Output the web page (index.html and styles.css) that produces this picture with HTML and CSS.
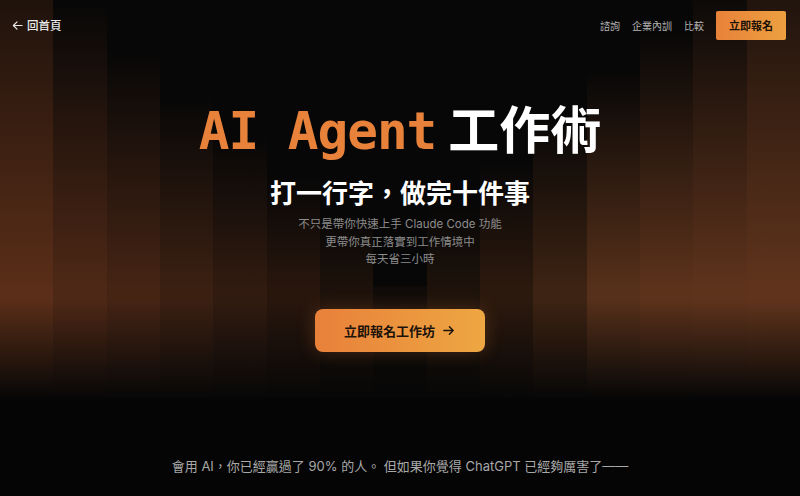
FILE: index.html
```html
<!DOCTYPE html>
<html lang="zh-Hant">
<head>
<meta charset="utf-8">
<title>AI Agent 工作術</title>
<link rel="stylesheet" href="styles.css">
</head>
<body>
<div class="page">
  <section class="hero">
    <div class="bars" aria-hidden="true">
      <span></span><span></span><span></span><span></span><span></span>
      <span></span><span></span><span></span><span></span><span></span>
      <span></span><span></span><span></span><span></span><span></span>
    </div>
    <header class="topbar">
      <a class="back" href="#">
        <svg class="back-icon" viewBox="0 0 12 12" width="11" height="11"><path d="M11 6H1.5M5.5 2L1.5 6l4 4" fill="none" stroke="currentColor" stroke-width="1.3" stroke-linecap="round" stroke-linejoin="round"/></svg>
        <span>回首頁</span>
      </a>
      <nav class="nav">
        <a href="#" class="nav-link">諮詢</a>
        <a href="#" class="nav-link">企業內訓</a>
        <a href="#" class="nav-link">比較</a>
        <a href="#" class="cta-sm">立即報名</a>
      </nav>
    </header>
    <div class="hero-body">
      <h1 class="title"><span class="title-mono">AI Agent</span><span class="title-cjk">工作術</span></h1>
      <h2 class="subtitle">打一行字，做完十件事</h2>
      <p class="lead">不只是帶你快速上手 Claude Code 功能<br>更帶你真正落實到工作情境中<br>每天省三小時</p>
      <a href="#" class="cta">立即報名工作坊
        <svg class="cta-icon" viewBox="0 0 14 14" width="13" height="13"><path d="M2 7h10M8 3l4 4-4 4" fill="none" stroke="currentColor" stroke-width="1.6" stroke-linecap="round" stroke-linejoin="round"/></svg>
      </a>
    </div>
  </section>
  <section class="intro">
    <p class="intro-text">會用 AI，你已經贏過了 90% 的人。 但如果你覺得 ChatGPT 已經夠厲害了——</p>
  </section>
</div>
</body>
</html>
```

FILE: styles.css
```css
* { box-sizing: border-box; }

html, body {
  margin: 0;
  padding: 0;
  background: #060606;
}

body {
  font-family: "Inter", "Noto Sans CJK TC", "Noto Sans", sans-serif;
  color: #e6e6e6;
  width: 800px;
  height: 496px;
  overflow: hidden;
}

a { text-decoration: none; color: inherit; }

.page {
  display: flex;
  flex-direction: column;
}

/* ---------- hero ---------- */
.hero {
  position: relative;
  height: 398px;
  background: #070707;
  overflow: hidden;
}

.bars {
  position: absolute;
  inset: 0;
  display: flex;
  z-index: 0;
}

.bars span {
  flex: 1;
  --top: 0px;
  --c: #3a2012;
  background: linear-gradient(to bottom,
    rgba(7,7,7,0) var(--top),
    var(--c) 288px,
    var(--c) 300px,
    #070707 398px);
}

.bars span:nth-child(1)  { --top: -120px; --c: #5a2e18; }
.bars span:nth-child(2)  { --top: 0px;    --c: #4e2816; }
.bars span:nth-child(3)  { --top: 50px;   --c: #452414; }
.bars span:nth-child(4)  { --top: 95px;   --c: #3b2012; }
.bars span:nth-child(5)  { --top: 135px;  --c: #311b10; }
.bars span:nth-child(6)  { --top: 175px;  --c: #28160d; }
.bars span:nth-child(7)  { --top: 210px;  --c: #1d120b; }
.bars span:nth-child(8)  { --top: 285px;  --c: #110c09; }
.bars span:nth-child(9)  { --top: 205px;  --c: #1e130b; }
.bars span:nth-child(10) { --top: 160px;  --c: #2c190e; }
.bars span:nth-child(11) { --top: 115px;  --c: #3d2313; }
.bars span:nth-child(12) { --top: 70px;   --c: #56301a; }
.bars span:nth-child(13) { --top: 30px;   --c: #5c321b; }
.bars span:nth-child(14) { --top: -20px;  --c: #5e331c; }
.bars span:nth-child(15) { --top: -120px; --c: #60341c; }

.topbar {
  position: relative;
  z-index: 1;
  height: 50px;
  display: flex;
  align-items: center;
  justify-content: space-between;
  padding: 0 14px 0 12px;
}

.back {
  display: flex;
  align-items: center;
  gap: 4px;
  font-size: 11.5px;
  font-weight: 500;
  color: #e8e8e8;
}

.back-icon { display: block; }

.nav {
  display: flex;
  align-items: center;
  gap: 12px;
}

.nav-link {
  font-size: 10px;
  color: #b4b4b4;
}

.cta-sm {
  display: flex;
  align-items: center;
  justify-content: center;
  width: 70px;
  height: 29px;
  background: linear-gradient(90deg, #e8823a, #eda040);
  color: #1a1208;
  font-size: 11px;
  font-weight: 700;
  border-radius: 2px;
}

.hero-body {
  position: relative;
  z-index: 1;
  display: flex;
  flex-direction: column;
  align-items: center;
  text-align: center;
}

.title {
  margin: 47px 0 0;
  height: 60px;
  display: flex;
  align-items: baseline;
  justify-content: center;
  gap: 12px;
  font-size: 51px;
  line-height: 60px;
  font-weight: 700;
}

.title-mono {
  font-family: "DejaVu Sans Mono", "Liberation Mono", monospace;
  color: #e8823a;
  letter-spacing: -1px;
}

.title-cjk {
  font-family: "Noto Sans CJK TC", sans-serif;
  color: #ffffff;
}

.subtitle {
  margin: 18px 0 0;
  font-family: "Noto Sans CJK TC", sans-serif;
  font-size: 26px;
  line-height: 34px;
  font-weight: 700;
  color: #ffffff;
}

.lead {
  margin: 7px 0 0;
  font-size: 11.5px;
  line-height: 17.5px;
  color: #8c8c8c;
}

.cta {
  margin-top: 40px;
  display: flex;
  align-items: center;
  gap: 7px;
  height: 43px;
  padding: 0 30px 0 29px;
  border-radius: 8px;
  background: linear-gradient(90deg, #e8803a, #eea742);
  color: #1c1209;
  font-size: 13px;
  font-weight: 700;
  box-shadow: 0 0 18px rgba(232, 128, 58, 0.25);
}

.cta-icon { display: block; }

/* ---------- intro ---------- */
.intro {
  background: #050505;
  height: 98px;
  padding-top: 58px;
}

.intro-text {
  margin: 0;
  text-align: center;
  font-size: 13px;
  line-height: 20px;
  color: #a8a8a8;
}
```
